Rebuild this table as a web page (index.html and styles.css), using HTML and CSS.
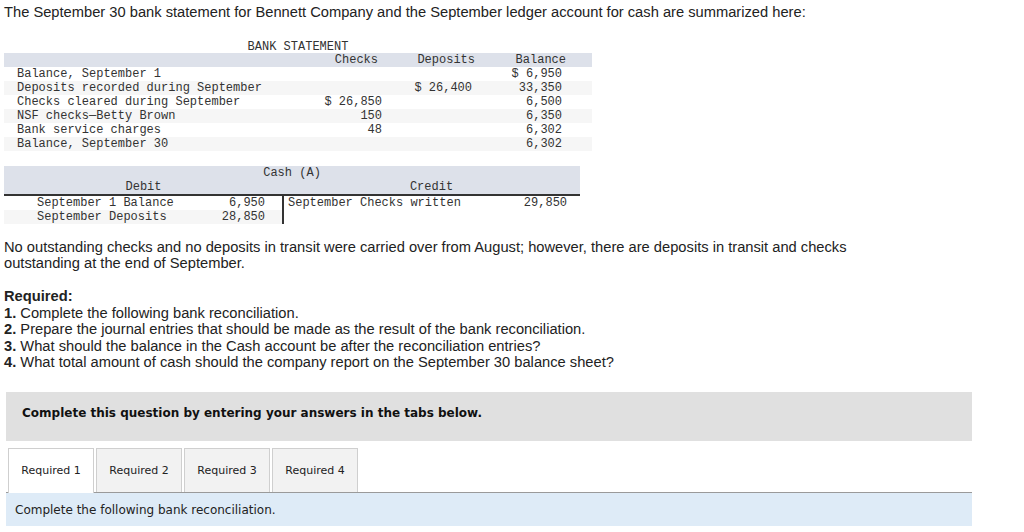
FILE: index.html
```html
<!DOCTYPE html>
<html>
<head>
<meta charset="utf-8">
<link rel="stylesheet" href="styles.css">
</head>
<body>
<div class="page">
  <p class="intro">The September 30 bank statement for Bennett Company and the September ledger account for cash are summarized here:</p>

  <div class="bank">
    <div class="bank-title">BANK STATEMENT</div>
    <table class="bank-table">
      <colgroup>
        <col class="w-label">
        <col class="w-checks">
        <col class="w-dep">
        <col class="w-bal">
      </colgroup>
      <thead>
        <tr>
          <th class="c-label"></th>
          <th class="c-checks">Checks</th>
          <th class="c-dep">Deposits</th>
          <th class="c-bal">Balance</th>
        </tr>
      </thead>
      <tbody>
        <tr><td class="c-label">Balance, September 1</td><td class="c-checks"></td><td class="c-dep"></td><td class="c-bal">$ 6,950</td></tr>
        <tr><td class="c-label">Deposits recorded during September</td><td class="c-checks"></td><td class="c-dep">$ 26,400</td><td class="c-bal">33,350</td></tr>
        <tr><td class="c-label">Checks cleared during September</td><td class="c-checks">$ 26,850</td><td class="c-dep"></td><td class="c-bal">6,500</td></tr>
        <tr><td class="c-label">NSF checks—Betty Brown</td><td class="c-checks">150</td><td class="c-dep"></td><td class="c-bal">6,350</td></tr>
        <tr><td class="c-label">Bank service charges</td><td class="c-checks">48</td><td class="c-dep"></td><td class="c-bal">6,302</td></tr>
        <tr><td class="c-label">Balance, September 30</td><td class="c-checks"></td><td class="c-dep"></td><td class="c-bal">6,302</td></tr>
      </tbody>
    </table>
  </div>

  <table class="cash-table">
    <colgroup>
      <col class="w-dl">
      <col class="w-da">
      <col class="w-kl">
      <col class="w-ka">
    </colgroup>
    <thead>
      <tr class="band"><th colspan="4">Cash (A)</th></tr>
      <tr class="band sides"><th colspan="2">Debit</th><th colspan="2">Credit</th></tr>
    </thead>
    <tbody>
      <tr>
        <td class="d-label">September 1 Balance</td>
        <td class="d-amt">6,950</td>
        <td class="k-label" rowspan="2">September Checks written</td>
        <td class="k-amt" rowspan="2">29,850</td>
      </tr>
      <tr>
        <td class="d-label">September Deposits</td>
        <td class="d-amt">28,850</td>
      </tr>
    </tbody>
  </table>

  <p class="para">No outstanding checks and no deposits in transit were carried over from August; however, there are deposits in transit and checks outstanding at the end of September.</p>

  <div class="required">
    <div class="req-head">Required:</div>
    <div><b>1.</b> Complete the following bank reconciliation.</div>
    <div><b>2.</b> Prepare the journal entries that should be made as the result of the bank reconciliation.</div>
    <div><b>3.</b> What should the balance in the Cash account be after the reconciliation entries?</div>
    <div><b>4.</b> What total amount of cash should the company report on the September 30 balance sheet?</div>
  </div>

  <div class="notice">Complete this question by entering your answers in the tabs below.</div>

  <div class="tabs">
    <div class="tab active">Required 1</div>
    <div class="tab">Required 2</div>
    <div class="tab">Required 3</div>
    <div class="tab">Required 4</div>
  </div>
  <div class="tab-panel">Complete the following bank reconciliation.</div>
</div>
</body>
</html>
```

FILE: styles.css
```css
html, body {
  margin: 0;
  padding: 0;
  background: #fff;
}
.page {
  padding: 3px 4px 0 4px;
  font-family: "Liberation Sans", Arial, sans-serif;
  color: #222;
}
.intro {
  margin: 0;
  font-size: 14.7px;
  line-height: 18px;
}

/* Bank statement */
.bank {
  margin-top: 19px;
  width: 588px;
  font-family: "Liberation Mono", "Courier New", monospace;
  font-size: 12px;
  color: #333;
}
.bank-title {
  text-align: center;
  line-height: 14px;
  height: 13px;
}
.bank-table {
  border-collapse: collapse;
  width: 588px;
  table-layout: fixed;
}
.w-label { width: 296px; }
.w-checks { width: 86px; }
.w-dep { width: 92px; }
.w-bal { width: 114px; }
.bank-table th, .bank-table td {
  padding: 0;
  height: 14px;
  line-height: 14px;
  font-weight: normal;
  white-space: nowrap;
}
.bank-table thead tr {
  background: #dde1ea;
}
.bank-table tbody tr:nth-child(even) {
  background: #f6f6f6;
}
.bank-table .c-label { padding-left: 13px; text-align: left; }
.bank-table .c-checks { text-align: right; padding-right: 4px; }
.bank-table .c-dep { text-align: right; padding-right: 6px; }
.bank-table .c-bal { text-align: right; padding-right: 30px; }
.bank-table th.c-checks { padding-right: 8px; }
.bank-table th.c-dep { padding-right: 3px; }
.bank-table th.c-bal { padding-right: 26px; }

/* Cash T-account */
.cash-table {
  margin-top: 15px;
  border-collapse: collapse;
  width: 576px;
  table-layout: fixed;
  font-family: "Liberation Mono", "Courier New", monospace;
  font-size: 12px;
  color: #333;
}
.w-dl { width: 211px; }
.w-da { width: 68px; }
.w-kl { width: 216px; }
.w-ka { width: 81px; }
.cash-table th, .cash-table td {
  padding: 0;
  height: 14px;
  line-height: 14px;
  font-weight: normal;
  white-space: nowrap;
}
.cash-table .band {
  background: #dde1ea;
}
.cash-table .band th { text-align: center; }
.cash-table .sides th { border-bottom: 2px solid #333; }
.cash-table tbody tr:nth-child(even) .d-label,
.cash-table tbody tr:nth-child(even) .d-amt { background: #f6f6f6; }
.cash-table .d-label { padding-left: 33px; text-align: left; }
.cash-table .d-amt { padding-right: 17px; text-align: right; }
.cash-table .k-label {
  padding-left: 4px;
  border-left: 2px solid #333;
  vertical-align: top;
  text-align: left;
}
.cash-table .k-amt {
  padding-right: 13px;
  text-align: right;
  vertical-align: top;
}

.para {
  margin: 15px 0 0 0;
  font-size: 14.7px;
  line-height: 16px;
  max-width: 870px;
}
.required {
  margin-top: 17px;
  font-size: 14.7px;
  line-height: 16.5px;
}
.req-head { font-weight: bold; }

.notice {
  margin: 21px 48px 0 2px;
  background: #e0e0e0;
  height: 49px;
  box-sizing: border-box;
  padding: 14px 0 0 16px;
  font-family: "DejaVu Sans", Verdana, sans-serif;
  font-weight: bold;
  font-size: 12px;
  line-height: 14px;
  color: #111;
}

.tabs {
  margin: 7px 48px 0 2px;
  display: flex;
  gap: 2px;
  padding-left: 2px;
  border-bottom: 1px solid #9a9a9a;
  height: 44px;
}
.tab {
  width: 86px;
  box-sizing: border-box;
  height: 44px;
  border: 1px solid #cfcfcf;
  border-bottom: none;
  background: #f2f2f2;
  display: flex;
  align-items: center;
  justify-content: center;
  font-family: "DejaVu Sans", Verdana, sans-serif;
  font-size: 11px;
  color: #222;
}
.tab.active {
  background: #fff;
  height: 45px;
  margin-bottom: -1px;
}
.tab-panel {
  margin: 0 48px 0 2px;
  background: #deebf7;
  height: 33px;
  box-sizing: border-box;
  padding: 10px 0 0 9px;
  font-family: "DejaVu Sans", Verdana, sans-serif;
  font-size: 12px;
  line-height: 14px;
  color: #222;
}
```
